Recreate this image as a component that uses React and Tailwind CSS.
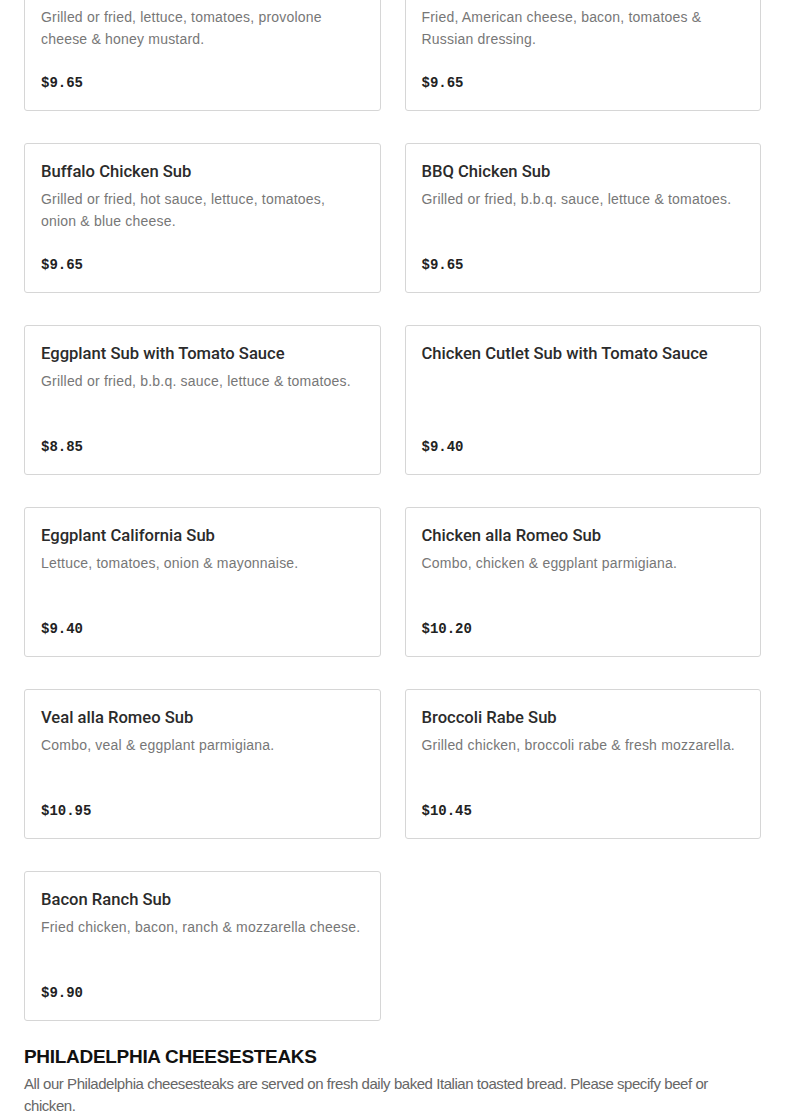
const items = [
  { name: 'Chicken Club Sub', desc: 'Grilled or fried, lettuce, tomatoes, provolone cheese & honey mustard.', price: '$9.65' },
  { name: 'Chicken Reuben Sub', desc: 'Fried, American cheese, bacon, tomatoes & Russian dressing.', price: '$9.65' },
  { name: 'Buffalo Chicken Sub', desc: 'Grilled or fried, hot sauce, lettuce, tomatoes, onion & blue cheese.', price: '$9.65' },
  { name: 'BBQ Chicken Sub', desc: 'Grilled or fried, b.b.q. sauce, lettuce & tomatoes.', price: '$9.65' },
  { name: 'Eggplant Sub with Tomato Sauce', desc: 'Grilled or fried, b.b.q. sauce, lettuce & tomatoes.', price: '$8.85' },
  { name: 'Chicken Cutlet Sub with Tomato Sauce', desc: '', price: '$9.40' },
  { name: 'Eggplant California Sub', desc: 'Lettuce, tomatoes, onion & mayonnaise.', price: '$9.40' },
  { name: 'Chicken alla Romeo Sub', desc: 'Combo, chicken & eggplant parmigiana.', price: '$10.20' },
  { name: 'Veal alla Romeo Sub', desc: 'Combo, veal & eggplant parmigiana.', price: '$10.95' },
  { name: 'Broccoli Rabe Sub', desc: 'Grilled chicken, broccoli rabe & fresh mozzarella.', price: '$10.45' },
  { name: 'Bacon Ranch Sub', desc: 'Fried chicken, bacon, ranch & mozzarella cheese.', price: '$9.90' },
];

const MenuCard = ({ item }) => (
  <div className="h-[150px] flex flex-col border border-[#d6d6d6] rounded-[3px] bg-white px-4 pt-4 pb-[17px]">
    <h3 className="text-[16.6px] leading-6 font-medium text-[#2b2b2b] font-['Roboto',sans-serif]">{item.name}</h3>
    <p className="mt-1 text-[14px] leading-[22px] text-[#777777] tracking-[0.2px]">{item.desc}</p>
    <p className="mt-auto font-['Liberation_Mono',monospace] font-bold text-[14px] leading-5 text-[#222]">{item.price}</p>
  </div>
);

export default function App() {
  return (
    <div className="min-h-screen bg-white font-['Liberation_Sans',Arial,sans-serif] overflow-hidden">
      <div className="px-6 -mt-[39px]">
        <div className="grid grid-cols-2 gap-x-6 gap-y-8">
          {items.map((item, i) => (
            <MenuCard key={i} item={item} />
          ))}
        </div>
        <div className="mt-6">
          <h2 className="text-[19px] leading-6 font-bold uppercase text-[#111] tracking-[-0.3px]">
            Philadelphia Cheesesteaks
          </h2>
          <p className="mt-1 max-w-[720px] text-[15px] leading-[22px] text-[#666666] tracking-[-0.45px]">
            All our Philadelphia cheesesteaks are served on fresh daily baked Italian toasted bread. Please specify beef or chicken.
          </p>
        </div>
      </div>
    </div>
  );
}
